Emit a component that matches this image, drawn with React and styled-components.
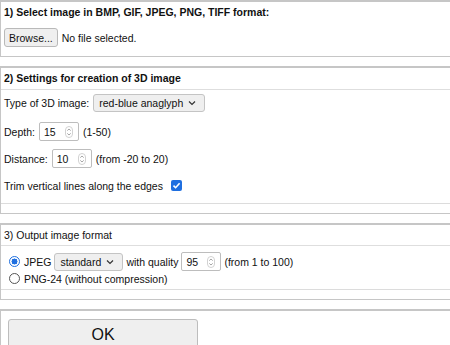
import React from 'react'
import styled, { createGlobalStyle } from 'styled-components'

const Global = createGlobalStyle`
    html, body {
        margin: 0;
        padding: 0;
        background: #fff;
        overflow: hidden;
    }
    body {
        font-family: "Liberation Sans", Arial, sans-serif;
        font-size: 10.5px;
        color: #111;
    }
`

function Spinner() {
    return (
        <svg width="8" height="12" viewBox="0 0 8 12">
            <rect x="0.5" y="0.5" width="7" height="11" rx="3.5" fill="none" stroke="#d2d2d2" />
            <path d="M2.3 4.6 L4 3 L5.7 4.6" fill="none" stroke="#9a9a9a" strokeWidth="0.9" />
            <path d="M2.3 7.4 L4 9 L5.7 7.4" fill="none" stroke="#9a9a9a" strokeWidth="0.9" />
        </svg>
    )
}

function Chevron() {
    return (
        <svg width="8" height="6" viewBox="0 0 8 6">
            <path d="M1 1.5 L4 4.5 L7 1.5" fill="none" stroke="#333" strokeWidth="1.2" />
        </svg>
    )
}

function App() {
    return (
        <Page>
            <Global />
            <Box>
                <Header bold>1) Select image in BMP, GIF, JPEG, PNG, TIFF format:</Header>
                <FileRow>
                    <Button>Browse...</Button>
                    <span>No file selected.</span>
                </FileRow>
            </Box>

            <Box>
                <Header bold tall divided>2) Settings for creation of 3D image</Header>
                <Body>
                    <Row first>
                        Type of 3D image:
                        <Select width={112}>red-blue anaglyph<Chevron /></Select>
                    </Row>
                    <Row>
                        Depth:
                        <NumInput>15<Spinner /></NumInput>
                        (1-50)
                    </Row>
                    <Row>
                        Distance:
                        <NumInput>10<Spinner /></NumInput>
                        (from -20 to 20)
                    </Row>
                    <Row>
                        Trim vertical lines along the edges
                        <Check>
                            <svg width="9" height="9" viewBox="0 0 9 9">
                                <path d="M1.5 4.6 L3.6 6.7 L7.6 2.2" fill="none" stroke="#fff" strokeWidth="1.6" />
                            </svg>
                        </Check>
                    </Row>
                </Body>
                <Footer />
            </Box>

            <Box>
                <Header divided>3) Output image format</Header>
                <Options>
                    <OptionRow>
                        <Radio checked />
                        JPEG
                        <Select width={69}>standard<Chevron /></Select>
                        with quality
                        <NumInput>95<Spinner /></NumInput>
                        (from 1 to 100)
                    </OptionRow>
                    <OptionRow>
                        <Radio />
                        PNG-24 (without compression)
                    </OptionRow>
                </Options>
                <Footer />
            </Box>

            <Box last>
                <OkButton>OK</OkButton>
            </Box>
        </Page>
    )
}

export default App

const Page = styled.div`
    display: flex;
    flex-direction: column;
    gap: 9px;
`

const Box = styled.div`
    border: 1px solid #c6c6c6;
    border-right: none;
    border-top-width: 2px;
    background: #fff;
    ${p => p.last && `
        padding: 8px 0 0 7px;
        border-bottom: none;
    `}
`

const Header = styled.div`
    height: ${p => (p.tall ? 21 : 20)}px;
    line-height: ${p => (p.tall ? 21 : 20)}px;
    padding: 0 3px;
    font-weight: ${p => (p.bold ? 700 : 400)};
    border-bottom: ${p => (p.divided ? '1px solid #dedede' : 'none')};
`

const FileRow = styled.div`
    display: flex;
    align-items: center;
    gap: 4px;
    padding: 6px 3px 9px;
`

const Button = styled.div`
    height: 19px;
    box-sizing: border-box;
    padding: 0 4px;
    display: flex;
    align-items: center;
    background: #efefef;
    border: 1px solid #b9b9b9;
    border-radius: 3px;
`

const Body = styled.div`
    display: flex;
    flex-direction: column;
    gap: 8px;
    padding: 3px 3px 8px;
    border-bottom: 1px solid #dcdcdc;
`

const Row = styled.div`
    display: flex;
    align-items: center;
    gap: 4px;
    height: 19px;
    margin-bottom: ${p => (p.first ? 2 : 0)}px;
`

const Footer = styled.div`
    height: 9px;
`

const Select = styled.div`
    width: ${p => p.width}px;
    height: 18px;
    box-sizing: border-box;
    display: flex;
    align-items: center;
    justify-content: space-between;
    padding: 0 8px 0 5px;
    background: #efefef;
    border: 1px solid #c4c4c4;
    border-radius: 3px;
`

const NumInput = styled.div`
    width: 40px;
    height: 19px;
    box-sizing: border-box;
    display: flex;
    align-items: center;
    justify-content: space-between;
    padding: 0 5px 0 4px;
    background: #fff;
    border: 1px solid #bdbdbd;
    border-radius: 2px;
`

const Check = styled.span`
    width: 11px;
    height: 11px;
    margin-left: 4px;
    border-radius: 2px;
    background: #1f6fe0;
    display: flex;
    align-items: center;
    justify-content: center;
`

const Options = styled.div`
    display: flex;
    flex-direction: column;
    padding: 7px 3px 2px 8px;
    border-bottom: 1px solid #dcdcdc;
`

const OptionRow = styled.div`
    display: flex;
    align-items: center;
    gap: 3px;
    height: 17px;
`

const Radio = styled.span`
    width: 11px;
    height: 11px;
    box-sizing: border-box;
    border-radius: 50%;
    border: ${p => (p.checked ? '1.5px solid #1f6fe0' : '1px solid #555')};
    background: ${p => (p.checked ? 'radial-gradient(circle, #1f6fe0 0 2.8px, #fff 3.2px)' : '#fff')};
    margin-right: 1px;
`

const OkButton = styled.div`
    width: 190px;
    height: 40px;
    box-sizing: border-box;
    display: flex;
    align-items: center;
    justify-content: center;
    font-size: 16px;
    background: #efefef;
    border: 1px solid #bdbdbd;
    border-radius: 3px;
    padding-bottom: 8px;
`
